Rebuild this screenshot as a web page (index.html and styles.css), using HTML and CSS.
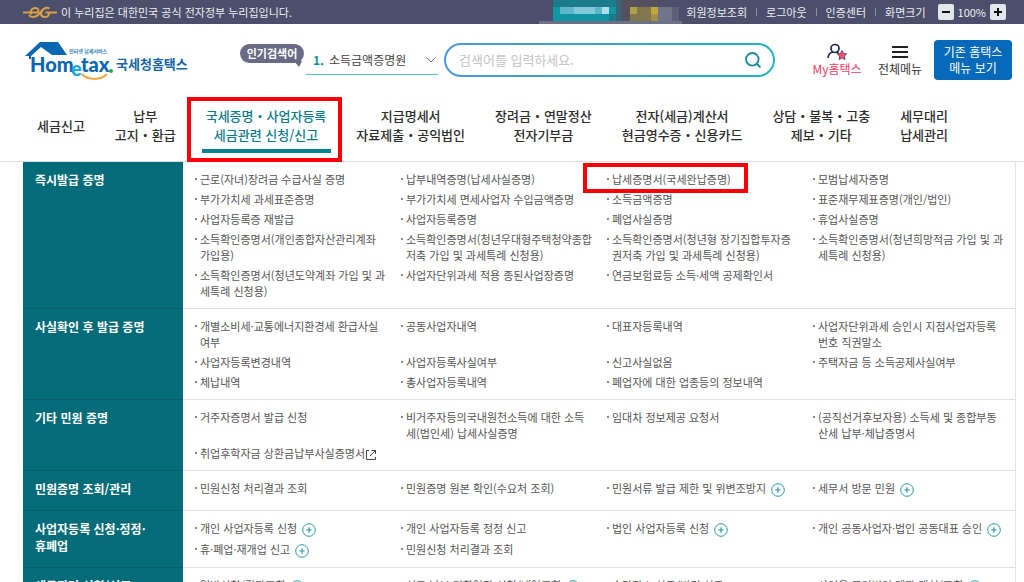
FILE: index.html
```html
<!DOCTYPE html>
<html lang="ko">
<head>
<meta charset="utf-8">
<title>국세청 홈택스</title>
<link rel="stylesheet" href="styles.css">
</head>
<body>
<svg class="defs" aria-hidden="true">
  <symbol id="plus" viewBox="0 0 14 14"><circle cx="7" cy="7" r="6.3" fill="none" stroke="#2a9aa6"/><path d="M7 4.2v5.6M4.2 7h5.6" stroke="#2a9aa6" stroke-width="1.2"/></symbol>
</svg>

<div class="topbar">
  <svg class="gov" viewBox="0 0 34 14" aria-hidden="true"><g fill="none" stroke="#dd9f45" stroke-width="2"><path d="M0 7.500h14.500M8 9.500c-1-5 2-7 5-6.500 3 .5 3 3 1.500 4.500M6 10c2 3 7 2.500 9.500-.5L20 4.500c2-2 4.500-2.200 6.500-1M20 4.500c-3 3-2.500 7 1 7.500 3 .5 5-1 5.500-4.500h-4M26.500 7.500H34"/></g></svg>
  <span class="notice">이 누리집은 대한민국 공식 전자정부 누리집입니다.</span>
  <svg class="masked" viewBox="0 0 144 24" aria-hidden="true">
    <path fill="#6d7186" d="M1 21h143v3H1z"/>
    <path fill="#1b7b8c" d="M15 0h63v21H15z"/>
    <path fill="#0f99a5" d="M15 7h7v14h-7zM71 7h7v7h-7z"/>
    <path fill="#1095a4" d="M22 14h49v7H22z"/>
    <path fill="#5db6cb" d="M22 7h49v7H22z"/>
    <path fill="#84c8da" d="M36 7h21v7H36z"/>
    <path fill="#b0dce4" d="M64 7h7v7h-7z"/>
    <path fill="#3b6375" d="M78 0h6v21h-6z"/>
    <path fill="#554f5e" d="M84 0h36v21H84z"/>
    <path fill="#b3a047" d="M92 7h7v7h-7z"/><path fill="#80774f" d="M99 7h14v7H99zM92 14h21v7H92z"/>
    <path fill="#c3a638" d="M113 7h7v7h-7z"/><path fill="#a28f4a" d="M113 14h7v7h-7z"/>
    <path fill="#70758a" d="M120 7h14v14h-14z"/><path fill="#5c607a" d="M134 7h7v14h-7z"/>
  </svg>
  <nav class="util">
    <a href="#">회원정보조회</a><i></i><a href="#">로그아웃</a><i></i><a href="#">인증센터</a><i></i><span>화면크기</span>
  </nav>
  <div class="scale">
    <button type="button" aria-label="축소"><svg viewBox="0 0 16 16"><path d="M4 8h8" stroke="#111" stroke-width="2"/></svg></button>
    <span>100%</span>
    <button type="button" aria-label="확대"><svg viewBox="0 0 16 16"><path d="M4 8h8M8 4v8" stroke="#111" stroke-width="2"/></svg></button>
  </div>
</div>

<header class="header">
  <a class="logo" href="#">
    <svg viewBox="0 0 90 40" aria-hidden="true">
      <path fill="#0a67b2" d="M1 16 16 2h18l9 13H28L17 7 7 16v3H5v-3z"/>
      <path fill="#fff" d="M15 11h3v3h-3z"/>
      <path d="M58 34c5 6 18 7 25 0" fill="none" stroke="#f0a63c" stroke-width="2"/>
      <text class="logo-tag" x="45" y="13">인터넷 납세서비스</text>
      <text class="logo-word" x="6" y="32">Hom</text>
      <text class="logo-e" x="47" y="36">e</text>
      <text class="logo-word" x="57" y="32">tax</text>
      <circle cx="87" cy="31" r="2" fill="#27a84f"/>
    </svg>
    <span class="logo-name">국세청홈택스</span>
  </a>
  <div class="badge">인기검색어<svg viewBox="0 0 8 6" aria-hidden="true"><path d="M0 0h8L5 6z" fill="#686a86"/></svg></div>
  <div class="rank">
    <label for="rank">1.</label>
    <select id="rank"><option>소득금액증명원</option></select>
    <svg viewBox="0 0 10 6" aria-hidden="true"><path d="M.5.5 5 5 9.500.5" fill="none" stroke="#777"/></svg>
  </div>
  <form class="search">
    <input type="text" aria-label="검색어" placeholder="검색어를 입력하세요.">
    <button type="button" aria-label="검색"><svg viewBox="0 0 16 16"><circle cx="7.300" cy="7.300" r="6.300" fill="none" stroke="#128c96" stroke-width="1.800"/><path d="m12 12 3.500 3.500" stroke="#128c96" stroke-width="1.800"/></svg></button>
  </form>
  <a class="quick quick-my" href="#">
    <svg viewBox="0 0 20 18" aria-hidden="true"><circle cx="8" cy="5.500" r="4" fill="none" stroke="#222a46" stroke-width="1.700"/><path d="M1 15c.3-3.500 2.300-5.500 5-6M9.500 9l2 1.500" fill="none" stroke="#222a46" stroke-width="1.700"/><path d="m15 7.500 1.500 3 3.200.4-2.400 2.300.7 3.300-3-1.600-3 1.600.7-3.300-2.400-2.300 3.200-.4z" fill="#f3506f" stroke="#5b3148" stroke-width=".8"/></svg>
    My홈택스
  </a>
  <a class="quick quick-all" href="#">
    <svg viewBox="0 0 20 18" aria-hidden="true"><path d="M2 4h16M2 9h16M2 14h16" stroke="#222" stroke-width="2"/></svg>
    전체메뉴
  </a>
  <button class="old" type="button">기존 홈택스<br>메뉴 보기</button>
</header>

<nav class="gnb">
  <a href="#">세금신고</a>
  <a href="#">납부<br>고지・환급</a>
  <a class="on" href="#">국세증명・사업자등록<br>세금관련 신청/신고</a>
  <a href="#">지급명세서<br>자료제출・공익법인</a>
  <a href="#">장려금・연말정산<br>전자기부금</a>
  <a href="#">전자(세금)계산서<br>현금영수증・신용카드</a>
  <a href="#">상담・불복・고충<br>제보・기타</a>
  <a href="#">세무대리<br>납세관리</a>
</nav>

<main class="mega">
  <section class="group">
    <h2>즉시발급 증명</h2>
    <ul>
      <li><a href="#">근로(자녀)장려금 수급사실 증명</a></li>
      <li><a href="#">납부내역증명(납세사실증명)</a></li>
      <li class="marked"><a href="#">납세증명서(국세완납증명)</a></li>
      <li><a href="#">모범납세자증명</a></li>
      <li><a href="#">부가가치세 과세표준증명</a></li>
      <li><a href="#">부가가치세 면세사업자 수입금액증명</a></li>
      <li><a href="#">소득금액증명</a></li>
      <li><a href="#">표준재무제표증명(개인/법인)</a></li>
      <li><a href="#">사업자등록증 재발급</a></li>
      <li><a href="#">사업자등록증명</a></li>
      <li><a href="#">폐업사실증명</a></li>
      <li><a href="#">휴업사실증명</a></li>
      <li><a href="#">소득확인증명서(개인종합자산관리계좌<br>가입용)</a></li>
      <li><a href="#">소득확인증명서(청년우대형주택청약종합<br>저축 가입 및 과세특례 신청용)</a></li>
      <li><a href="#">소득확인증명서(청년형 장기집합투자증<br>권저축 가입 및 과세특례 신청용)</a></li>
      <li><a href="#">소득확인증명서(청년희망적금 가입 및 과<br>세특례 신청용)</a></li>
      <li><a href="#">소득확인증명서(청년도약계좌 가입 및 과<br>세특례 신청용)</a></li>
      <li><a href="#">사업자단위과세 적용 종된사업장증명</a></li>
      <li><a href="#">연금보험료등 소득·세액 공제확인서</a></li>
    </ul>
  </section>
  <section class="group">
    <h2>사실확인 후 발급 증명</h2>
    <ul>
      <li><a href="#">개별소비세·교통에너지환경세 환급사실<br>여부</a></li>
      <li><a href="#">공동사업자내역</a></li>
      <li><a href="#">대표자등록내역</a></li>
      <li><a href="#">사업자단위과세 승인시 지점사업자등록<br>번호 직권말소</a></li>
      <li><a href="#">사업자등록변경내역</a></li>
      <li><a href="#">사업자등록사실여부</a></li>
      <li><a href="#">신고사실없음</a></li>
      <li><a href="#">주택자금 등 소득공제사실여부</a></li>
      <li><a href="#">체납내역</a></li>
      <li><a href="#">총사업자등록내역</a></li>
      <li><a href="#">폐업자에 대한 업종등의 정보내역</a></li>
    </ul>
  </section>
  <section class="group">
    <h2>기타 민원 증명</h2>
    <ul>
      <li><a href="#">거주자증명서 발급 신청</a></li>
      <li><a href="#">비거주자등의국내원천소득에 대한 소득<br>세(법인세) 납세사실증명</a></li>
      <li><a href="#">임대차 정보제공 요청서</a></li>
      <li><a href="#">(공직선거후보자용) 소득세 및 종합부동<br>산세 납부·체납증명서</a></li>
      <li><a href="#">취업후학자금 상환금납부사실증명서<svg class="ext" viewBox="0 0 12 12" aria-hidden="true"><path d="M4 1.500H1.500v9h9V8M6.500 1.500h4V5M10.500 1.500 5 7" fill="none" stroke="#444"/></svg></a></li>
    </ul>
  </section>
  <section class="group">
    <h2>민원증명 조회/관리</h2>
    <ul>
      <li><a href="#">민원신청 처리결과 조회</a></li>
      <li><a href="#">민원증명 원본 확인(수요처 조회)</a></li>
      <li><a href="#">민원서류 발급 제한 및 위변조방지<svg class="more"><use href="#plus"/></svg></a></li>
      <li><a href="#">세무서 방문 민원<svg class="more"><use href="#plus"/></svg></a></li>
    </ul>
  </section>
  <section class="group">
    <h2>사업자등록 신청·정정·<br>휴폐업</h2>
    <ul>
      <li><a href="#">개인 사업자등록 신청<svg class="more"><use href="#plus"/></svg></a></li>
      <li><a href="#">개인 사업자등록 정정 신고</a></li>
      <li><a href="#">법인 사업자등록 신청<svg class="more"><use href="#plus"/></svg></a></li>
      <li><a href="#">개인 공동사업자·법인 공동대표 승인<svg class="more"><use href="#plus"/></svg></a></li>
      <li><a href="#">휴·폐업·재개업 신고<svg class="more"><use href="#plus"/></svg></a></li>
      <li><a href="#">민원신청 처리결과 조회</a></li>
    </ul>
  </section>
  <section class="group">
    <h2>세금관련 신청/신고</h2>
    <ul>
      <li><a href="#">일반신청/결과조회<svg class="more"><use href="#plus"/></svg></a></li>
      <li><a href="#">신고·납부 기한연장 신청/내역조회<svg class="more"><use href="#plus"/></svg></a></li>
      <li><a href="#">송달장소 신고/변경 신고</a></li>
      <li><a href="#">사업용·공익법인 계좌 개설/조회<svg class="more"><use href="#plus"/></svg></a></li>
    </ul>
  </section>
</main>
</body>
</html>
```

FILE: styles.css
```css
* { box-sizing: border-box; }

body {
  margin: 0;
  height: 100vh;
  overflow: hidden;
  background: #fff;
  color: #555;
  font-family: "Noto Sans CJK KR", "Noto Sans", sans-serif;
  font-size: 11px;
  line-height: 16px;
}

a { color: inherit; text-decoration: none; }
button, input, select { font: inherit; color: inherit; margin: 0; padding: 0; border: 0; background: none; }
svg { display: block; flex: none; }
.defs { position: absolute; width: 0; height: 0; }

/* Top bar */
.topbar {
  display: flex;
  align-items: center;
  height: 24px;
  padding: 0 18px 0 23px;
  background: #4b4f6b;
  color: #eceef3;
  white-space: nowrap;
}
.gov { width: 34px; height: 14px; margin-right: 4px; }
.masked { width: 144px; height: 24px; margin-left: auto; margin-right: 4px; }
.util { display: flex; align-items: center; gap: 9px; }
.util i { width: 1px; height: 8px; background: #8d90a4; }
.scale { display: flex; align-items: center; gap: 4px; margin-left: 12px; }
.scale button { width: 16px; height: 16px; border-radius: 2px; background: #e0e7e9; }

/* Header */
.header {
  display: flex;
  align-items: center;
  height: 72px;
  padding: 0 12px 0 24px;
  white-space: nowrap;
}
.logo { display: flex; align-items: center; gap: 2px; width: 164px; margin-right: 52px; }
.logo svg { width: 90px; height: 40px; }
.logo-word { font: 900 20px Lato, sans-serif; fill: #0a67b2; }
.logo-e { font: 900 20px Lato, sans-serif; fill: #18a5e0; }
.logo-tag { font-size: 5px; font-weight: 700; fill: #2b7fb8; }
.logo-name { margin-top: 8px; font-size: 13px; font-weight: 700; color: #1765a5; }

.badge {
  position: relative;
  width: 64px;
  margin: 0 2px 14px 0;
  padding: 1px 0 2px;
  border-radius: 10px;
  background: #686a86;
  color: #fff;
  font-weight: 700;
  text-align: center;
}
.badge svg { position: absolute; right: 2px; bottom: -4px; width: 8px; height: 6px; }

.rank {
  display: flex;
  align-items: center;
  width: 132px;
  height: 30px;
  margin-right: 6px;
  padding: 0 2px 0 7px;
  border-bottom: 1px solid #5abcb9;
  font-size: 12px;
}
.rank label { width: 16px; color: #148c96; font-weight: 700; }
.rank select { flex: 1; min-width: 0; appearance: none; color: #444; }
.rank svg { width: 10px; height: 6px; }

.search {
  display: flex;
  align-items: center;
  flex: 1;
  height: 34px;
  margin-right: 36px;
  padding: 0 12px 0 13px;
  border: 2px solid transparent;
  border-radius: 17px;
  background: linear-gradient(#fff, #fff) padding-box, linear-gradient(90deg, #4c95e4, #20b5bd) border-box;
}
.search input { flex: 1; min-width: 0; font-size: 13px; outline: 0; }
.search input::placeholder { color: #c4c4c4; opacity: 1; }
.search svg { width: 16px; height: 16px; }

.quick { display: flex; flex-direction: column; align-items: center; font-size: 12px; color: #333; }
.quick svg { width: 20px; height: 18px; }
.quick-my { width: 52px; margin-right: 14px; color: #ee3c63; }
.quick-all { width: 46px; margin-right: 11px; }

.old {
  width: 78px;
  padding: 4px 0;
  border-radius: 4px;
  background: #0669b9;
  color: #fff;
  font-size: 12px;
}

/* Main navigation */
.gnb {
  display: flex;
  align-items: center;
  gap: 30px;
  padding: 10px 37px 17px;
  border-bottom: 1px solid #dedede;
  color: #2c2c2c;
  font-size: 13px;
  font-weight: 500;
  line-height: 19px;
  text-align: center;
  white-space: nowrap;
}
.on { position: relative; color: #0b7c8a; }
.on::before {
  content: "";
  position: absolute;
  inset: -9px -16px -18px -19px;
  border: 4px solid #fb0007;
}
.on::after {
  content: "";
  position: absolute;
  inset: auto -5px -9px -4px;
  height: 4px;
  background: #078391;
}

/* Expanded menu */
.mega { margin: 0 8px 0 23px; border-right: 1px solid #e4e4e4; }
.group { display: grid; grid-template-columns: 160px 1fr; min-height: 40px; }
.group h2 {
  margin: 0;
  padding: 9px 12px;
  border-bottom: 1px solid #095e69;
  background: #046b78;
  color: #fff;
  font-size: 12px;
  line-height: 17px;
  white-space: nowrap;
}
.group ul {
  display: grid;
  grid-template-columns: repeat(4, 1fr);
  align-content: start;
  gap: 4px;
  margin: 0;
  padding: 9px 0 9px 12px;
  border-bottom: 1px solid #e0e0e0;
  list-style: none;
}
.group li { position: relative; padding-left: 5px; white-space: nowrap; }
.group li::before { content: ""; position: absolute; left: 0; top: 7px; width: 2px; height: 2px; background: #888; }
.marked::after {
  content: "";
  position: absolute;
  inset: -8px 61px -6px -24px;
  border: 4px solid #fb0007;
}
.more, .ext { display: inline-block; vertical-align: middle; }
.more { width: 14px; height: 14px; margin-left: 5px; }
.ext { width: 12px; height: 12px; }
```
